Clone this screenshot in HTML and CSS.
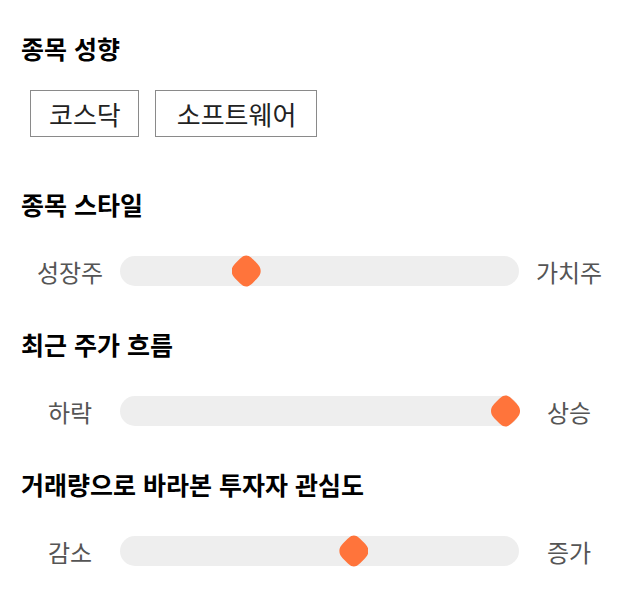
FILE: index.html
```html
<!DOCTYPE html>
<html lang="ko">
<head>
  <meta charset="UTF-8">
  <title>종목 성향</title>
  <link rel="stylesheet" href="styles.css">
</head>
<body>
<div class="panel">
  <div class="section">
    <h2 class="title">종목 성향</h2>
    <div class="tags">
      <span class="tag">코스닥</span>
      <span class="tag">소프트웨어</span>
    </div>
  </div>

  <div class="section">
    <h2 class="title">종목 스타일</h2>
    <div class="slider-row">
      <span class="label">성장주</span>
      <div class="track">
        <span class="thumb" style="left: 31.5%"></span>
      </div>
      <span class="label">가치주</span>
    </div>
  </div>

  <div class="section">
    <h2 class="title">최근 주가 흐름</h2>
    <div class="slider-row">
      <span class="label">하락</span>
      <div class="track">
        <span class="thumb" style="left: 96.5%"></span>
      </div>
      <span class="label">상승</span>
    </div>
  </div>

  <div class="section">
    <h2 class="title">거래량으로 바라본 투자자 관심도</h2>
    <div class="slider-row">
      <span class="label">감소</span>
      <div class="track">
        <span class="thumb" style="left: 58.5%"></span>
      </div>
      <span class="label">증가</span>
    </div>
  </div>
</div>
</body>
</html>
```

FILE: styles.css
```css
html, body {
  margin: 0;
  padding: 0;
  background: #fff;
}
body {
  font-family: "Noto Sans CJK KR", "Noto Sans", sans-serif;
  color: #111;
}
.panel {
  padding: 32px 20px 0 21px;
}
.section {
  margin-bottom: 42px;
}
.section:first-child {
  margin-bottom: 51px;
}
.title {
  margin: 0;
  font-size: 25px;
  font-weight: bold;
  line-height: 32px;
  color: #000;
}
.tags {
  display: flex;
  gap: 16px;
  margin-top: 26px;
  padding-left: 9px;
}
.tag {
  display: flex;
  align-items: center;
  height: 45px;
  padding: 0 19px;
  border: 1px solid #8a8a8a;
  font-size: 26px;
  color: #222;
}
.tag:first-child {
  padding: 0 17px 0 18px;
}
.tag:last-child {
  padding: 0 20px 0 21px;
}
.slider-row {
  display: flex;
  align-items: center;
  margin-top: 36px;
  margin-left: -1px;
  height: 30px;
}
.label {
  width: 100px;
  text-align: center;
  font-size: 24px;
  color: #555;
}
.track {
  position: relative;
  width: 399px;
  height: 30px;
  border-radius: 15px;
  background: #eee;
}
.thumb {
  position: absolute;
  top: -1px;
  width: 29px;
  height: 32px;
  margin-left: -14px;
  background: #ff743b;
  clip-path: path("M14.5 0.5 C18 0.5 21 4 24.5 7.5 C28 11 29 13 29 16 C29 19 28 21 24.5 24.5 C21 28 18 31.5 14.5 31.5 C11 31.5 8 28 4.5 24.5 C1 21 0 19 0 16 C0 13 1 11 4.5 7.5 C8 4 11 0.5 14.5 0.5 Z");
}
```
